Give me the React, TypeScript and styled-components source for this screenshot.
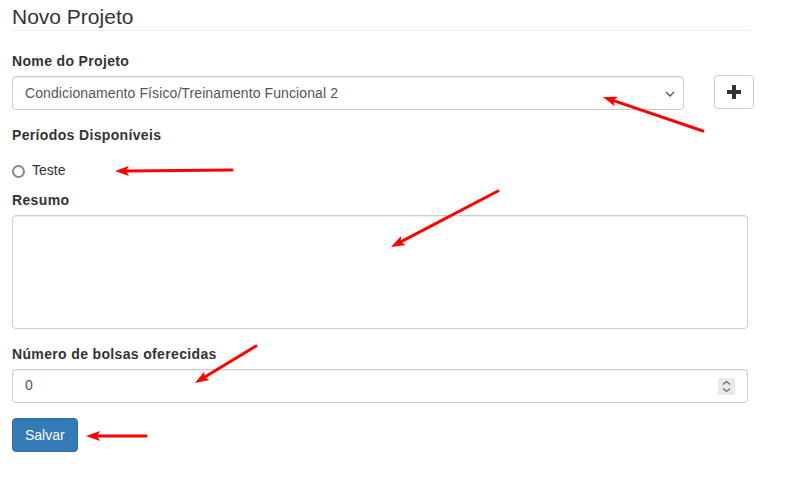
import React from "react";
import styled, { createGlobalStyle } from "styled-components";

const Global = createGlobalStyle`
  html, body { margin: 0; padding: 0; background: #fff; }
  body { font-family: "Liberation Sans", Arial, Helvetica, sans-serif; color: #333; font-size: 14px; line-height: 1.42857; }
  * { box-sizing: border-box; }
`;

const Page = styled.div`
  position: relative;
  width: 800px;
  height: 479px;
  padding: 5px 40px 0 12px;
`;

const Heading = styled.h3`
  margin: 0;
  padding-bottom: 2px;
  font-size: 21px;
  font-weight: 400;
  line-height: 23px;
  color: #333;
  border-bottom: 1px solid #eee;
  width: 738px;
`;

const Form = styled.form`
  width: 736px;
  padding-top: 20px;
`;

const Group = styled.div<{ $mb?: number }>`
  margin-bottom: ${(p) => (p.$mb ?? 15)}px;
`;

const Label = styled.label`
  display: block;
  font-weight: 700;
  font-size: 14px;
  line-height: 20px;
  letter-spacing: 0.35px;
  margin-bottom: 5px;
  color: #333;
`;

const Row = styled.div`
  display: flex;
  align-items: flex-start;
  gap: 30px;
`;

const SelectBox = styled.div`
  flex: 0 0 672px;
  height: 34px;
  border: 1px solid #ccc;
  border-radius: 4px;
  box-shadow: inset 0 1px 1px rgba(0, 0, 0, 0.075);
  display: flex;
  align-items: center;
  justify-content: space-between;
  padding: 1px 8px 0 12px;
  color: #555;
  font-size: 14px;
  letter-spacing: 0.1px;
`;

const AddButton = styled.button`
  flex: 0 0 40px;
  height: 34px;
  margin-top: -1px;
  border: 1px solid #ccc;
  border-radius: 4px;
  background: #fff;
  display: flex;
  align-items: center;
  justify-content: center;
  padding: 0;
`;

const RadioRow = styled.div`
  display: flex;
  align-items: center;
  gap: 7px;
  height: 20px;
  margin-top: 16px;
  margin-bottom: 9px;
  font-size: 14px;
  color: #333;
`;

const RadioCircle = styled.span`
  width: 13px;
  height: 13px;
  border-radius: 50%;
  border: 2px solid #85858f;
  background: #fff;
`;

const TextArea = styled.div`
  width: 736px;
  height: 114px;
  border: 1px solid #ccc;
  border-radius: 4px;
  box-shadow: inset 0 1px 1px rgba(0, 0, 0, 0.075);
`;

const NumberBox = styled.div`
  width: 736px;
  height: 34px;
  border: 1px solid #ccc;
  border-radius: 4px;
  box-shadow: inset 0 1px 1px rgba(0, 0, 0, 0.075);
  display: flex;
  align-items: center;
  justify-content: space-between;
  padding: 0 12px 0 12px;
  color: #555;
`;

const Spinner = styled.span`
  width: 17px;
  height: 17px;
  background: #e9e9ed;
  display: flex;
  align-items: center;
  justify-content: center;
`;

const PrimaryButton = styled.button`
  height: 34px;
  padding: 0 12px;
  background: #337ab7;
  border: 1px solid #2e6da4;
  border-radius: 4px;
  color: #fff;
  font-family: "Liberation Sans", Arial, sans-serif;
  font-size: 14px;
`;

const Arrows = styled.svg`
  position: absolute;
  left: 0;
  top: 0;
  width: 800px;
  height: 479px;
  pointer-events: none;
`;

type A = { x1: number; y1: number; x2: number; y2: number };
const arrows: A[] = [
  { x1: 703, y1: 131, x2: 603, y2: 97 },
  { x1: 232, y1: 170, x2: 115, y2: 171 },
  { x1: 498, y1: 191, x2: 391, y2: 247 },
  { x1: 256, y1: 346, x2: 195, y2: 383 },
  { x1: 146, y1: 436, x2: 86, y2: 436 },
];

function Arrow({ x1, y1, x2, y2 }: A) {
  const dx = x2 - x1;
  const dy = y2 - y1;
  const len = Math.hypot(dx, dy);
  const ux = dx / len;
  const uy = dy / len;
  const hl = 14;
  const hw = 5;
  const bx = x2 - ux * hl;
  const by = y2 - uy * hl;
  const px = -uy;
  const py = ux;
  return (
    <g>
      <line x1={x1} y1={y1} x2={bx + ux * 2} y2={by + uy * 2} stroke="#f00" strokeWidth={3} strokeLinecap="round" />
      <polygon
        points={`${x2},${y2} ${bx + px * hw},${by + py * hw} ${bx + ux * 3},${by + uy * 3} ${bx - px * hw},${by - py * hw}`}
        fill="#f00"
      />
    </g>
  );
}

export default function App() {
  return (
    <>
      <Global />
      <Page>
        <Heading>Novo Projeto</Heading>
        <Form onSubmit={(e) => e.preventDefault()}>
          <Group>
            <Label>Nome do Projeto</Label>
            <Row>
              <SelectBox>
                <span>Condicionamento Físico/Treinamento Funcional 2</span>
                <svg width="10" height="6" viewBox="0 0 10 6">
                  <path d="M1 1 L5 5 L9 1" fill="none" stroke="#555" strokeWidth="1.3" />
                </svg>
              </SelectBox>
              <AddButton type="button">
                <svg width="14" height="14" viewBox="0 0 14 14">
                  <rect x="5" y="0" width="4" height="14" fill="#333" />
                  <rect x="0" y="5" width="14" height="4" fill="#333" />
                </svg>
              </AddButton>
            </Row>
          </Group>
          <Group $mb={0}>
            <Label>Períodos Disponíveis</Label>
            <RadioRow>
              <RadioCircle />
              <span>Teste</span>
            </RadioRow>
          </Group>
          <Group>
            <Label>Resumo</Label>
            <TextArea />
          </Group>
          <Group>
            <Label>Número de bolsas oferecidas</Label>
            <NumberBox>
              <span>0</span>
              <Spinner>
                <svg width="9" height="13" viewBox="0 0 9 13">
                  <path d="M1 4.5 L4.5 1.5 L8 4.5" fill="none" stroke="#666" strokeWidth="1.2" />
                  <path d="M1 8.5 L4.5 11.5 L8 8.5" fill="none" stroke="#666" strokeWidth="1.2" />
                </svg>
              </Spinner>
            </NumberBox>
          </Group>
          <PrimaryButton type="submit">Salvar</PrimaryButton>
        </Form>
        <Arrows viewBox="0 0 800 479">
          {arrows.map((a, i) => (
            <Arrow key={i} {...a} />
          ))}
        </Arrows>
      </Page>
    </>
  );
}
